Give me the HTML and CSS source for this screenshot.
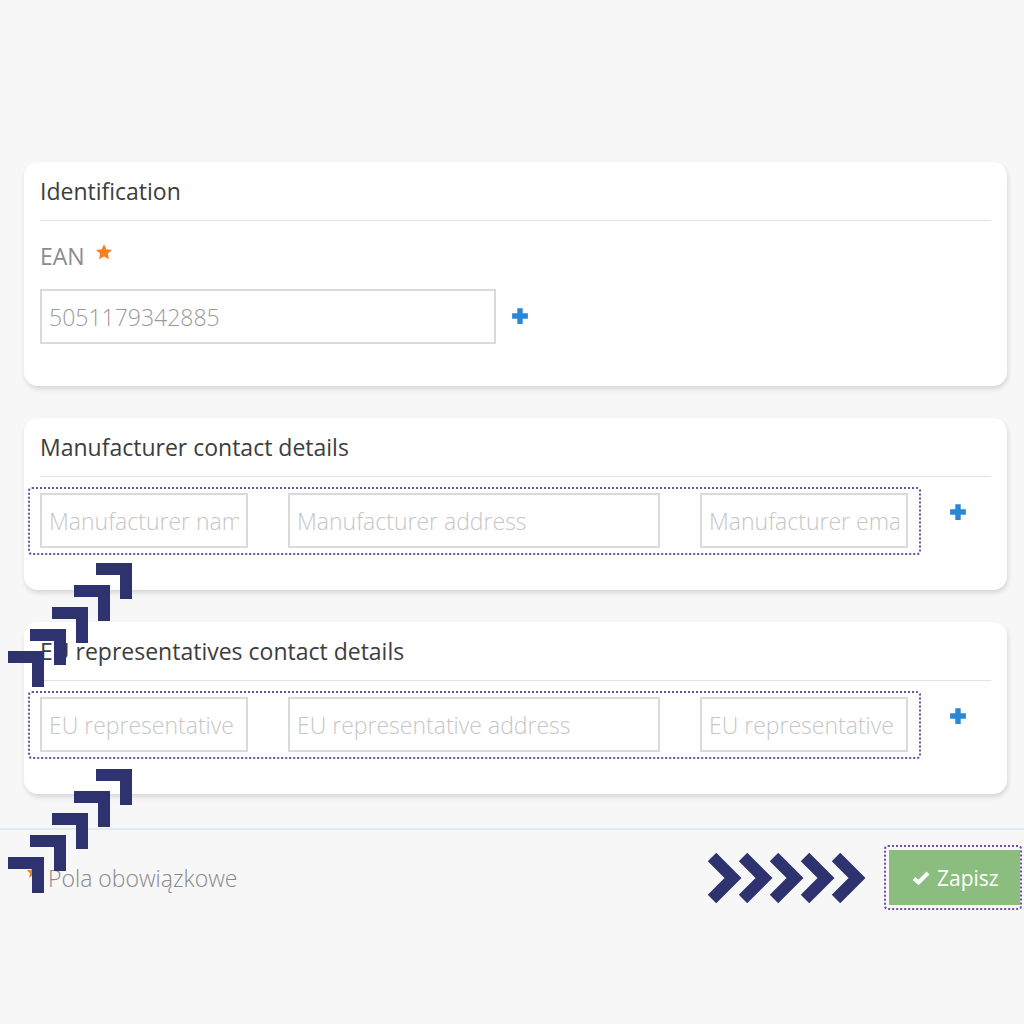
FILE: index.html
```html
<!DOCTYPE html>
<html>
<head>
    <meta charset="utf-8">
    <title>Product data</title>
    <link rel="stylesheet" href="styles.css">
</head>
<body>
    <div class="page">
        <div class="card">
            <h2 class="card-title">Identification</h2>
            <div class="field-label">
                EAN
                <svg class="star" viewBox="0 0 24 24"><path d="M12 1.5l3.2 6.9 7.4.8-5.5 5.1 1.5 7.4L12 17.9l-6.6 3.8 1.5-7.4-5.5-5.1 7.4-.8z"/></svg>
            </div>
            <div class="single-row">
                <input type="text" class="input ean" value="5051179342885">
                <button class="add" aria-label="Add">
                    <svg viewBox="0 0 16 16"><path d="M8 1v14M1 8h14"/></svg>
                </button>
            </div>
        </div>

        <div class="card">
            <h2 class="card-title">Manufacturer contact details</h2>
            <div class="contact-row">
                <div class="contact-group">
                    <input type="text" class="input" placeholder="Manufacturer name">
                    <input type="text" class="input" placeholder="Manufacturer address">
                    <input type="text" class="input" placeholder="Manufacturer email">
                </div>
                <button class="add raised" aria-label="Add">
                    <svg viewBox="0 0 16 16"><path d="M8 1v14M1 8h14"/></svg>
                </button>
            </div>
        </div>

        <div class="card">
            <h2 class="card-title">EU representatives contact details</h2>
            <div class="contact-row">
                <div class="contact-group">
                    <input type="text" class="input" placeholder="EU representative name">
                    <input type="text" class="input" placeholder="EU representative address">
                    <input type="text" class="input" placeholder="EU representative email">
                </div>
                <button class="add raised" aria-label="Add">
                    <svg viewBox="0 0 16 16"><path d="M8 1v14M1 8h14"/></svg>
                </button>
            </div>
        </div>
    </div>

    <div class="footer">
        <div class="required-note">
            <svg class="star small" viewBox="0 0 24 24"><path d="M12 1.5l3.2 6.9 7.4.8-5.5 5.1 1.5 7.4L12 17.9l-6.6 3.8 1.5-7.4-5.5-5.1 7.4-.8z"/></svg>
            Pola obowiązkowe
        </div>
        <div class="actions">
            <svg class="chevrons" viewBox="0 0 159 50">
                <polyline points="5,4 26,25 5,46"/>
                <polyline points="36,4 57,25 36,46"/>
                <polyline points="67,4 88,25 67,46"/>
                <polyline points="98,4 119,25 98,46"/>
                <polyline points="129,4 150,25 129,46"/>
            </svg>
            <div class="save-wrap">
                <button class="save">
                    <svg viewBox="0 0 18 14"><path d="M2 7.5l4.5 4 9.5-9.5"/></svg>
                    Zapisz
                </button>
            </div>
        </div>
    </div>

    <!-- step markers drawn over the form -->
    <div class="steps steps-top">
        <span class="step" style="left:96px;top:563px"></span>
        <span class="step" style="left:74px;top:585px"></span>
        <span class="step" style="left:52px;top:607px"></span>
        <span class="step" style="left:30px;top:629px"></span>
        <span class="step" style="left:8px;top:651px"></span>
    </div>
    <div class="steps steps-bottom">
        <span class="step" style="left:96px;top:769px"></span>
        <span class="step" style="left:74px;top:791px"></span>
        <span class="step" style="left:52px;top:813px"></span>
        <span class="step" style="left:30px;top:835px"></span>
        <span class="step" style="left:8px;top:857px"></span>
    </div>
</body>
</html>
```

FILE: styles.css
```css
body {
    font-family: "Open Sans", "Liberation Sans", sans-serif;
    margin: 0;
    background-color: #f7f7f7;
    position: relative;
    min-height: 1024px;
    overflow: hidden;
}
.page {
    padding: 162px 17px 0 24px;
    display: flex;
    flex-direction: column;
    gap: 32px;
}
.card {
    background-color: white;
    border-radius: 14px;
    padding: 0 16px;
    box-shadow: 1px 3px 5px rgba(0, 0, 0, 0.13);
}
.card-title {
    margin: 0;
    padding: 15px 0 15px;
    font-size: 23px;
    line-height: 28px;
    font-weight: 400;
    color: #3d3d3d;
    border-bottom: 1px solid #e2e2e2;
}
.field-label {
    margin-top: 22px;
    font-size: 23px;
    line-height: 27px;
    color: #8c8c8c;
    display: flex;
    align-items: center;
    gap: 10px;
}
.star {
    width: 18px;
    height: 18px;
    fill: #f5821f;
    margin-top: -10px;
}
.single-row {
    margin-top: 19px;
    padding-bottom: 42px;
    display: flex;
    align-items: center;
    gap: 14px;
}
.input {
    box-sizing: border-box;
    height: 55px;
    border: 2px solid #dadada;
    padding: 0 7px;
    font-family: "Open Sans", "Liberation Sans", sans-serif;
    font-size: 23px;
    font-weight: 300;
    color: #9a9a9a;
    background: white;
    outline: none;
    min-width: 0;
}
.input::placeholder {
    color: #c6c6c6;
}
.ean {
    width: 456px;
}
.add {
    border: none;
    background: none;
    padding: 0;
    width: 20px;
    height: 20px;
    cursor: pointer;
}
.add.raised {
    margin-top: -16px;
}
.add svg {
    width: 18px;
    height: 18px;
    stroke: #2a87d6;
    stroke-width: 4.8;
    fill: none;
}
.contact-row {
    margin-top: 10px;
    padding-bottom: 35px;
    display: flex;
    align-items: center;
    gap: 27px;
}
.contact-group {
    margin-left: -12px;
    padding: 4px 11px 5px 10px;
    border: 2px dotted #6f4f9f;
    border-radius: 4px;
    display: grid;
    grid-template-columns: 208px 372px 208px;
    column-gap: 40px;
}
.footer {
    margin-top: 34px;
    border-top: 2px solid #e2eaf1;
    padding: 15px 2px 0 0;
    display: flex;
    justify-content: space-between;
    align-items: center;
}
.required-note {
    padding-left: 26px;
    font-size: 23px;
    font-weight: 300;
    color: #8a8a8a;
    display: flex;
    align-items: center;
    gap: 8px;
}
.star.small {
    width: 14px;
    height: 14px;
    margin-top: -12px;
}
.actions {
    display: flex;
    align-items: center;
    gap: 18px;
}
.chevrons {
    width: 159px;
    height: 50px;
    fill: none;
    stroke: #2e3370;
    stroke-width: 12;
    stroke-linejoin: miter;
}
.save-wrap {
    border: 2px dotted #6f4f9f;
    border-radius: 4px;
    padding: 3px 0 3px 3px;
}
.save {
    display: flex;
    align-items: center;
    gap: 7px;
    width: 131px;
    height: 55px;
    padding: 0 0 0 23px;
    border: none;
    background-color: #8abd7e;
    color: white;
    font-family: "Open Sans", "Liberation Sans", sans-serif;
    font-size: 21px;
    cursor: pointer;
}
.save svg {
    width: 18px;
    height: 14px;
    stroke: white;
    stroke-width: 4;
    fill: none;
}
.step {
    position: absolute;
    width: 36px;
    height: 36px;
}
.step::before,
.step::after {
    content: "";
    position: absolute;
    background-color: #2e3370;
}
.step::before {
    left: 0;
    top: 0;
    width: 36px;
    height: 12px;
}
.step::after {
    right: 0;
    top: 0;
    width: 12px;
    height: 36px;
}
```
